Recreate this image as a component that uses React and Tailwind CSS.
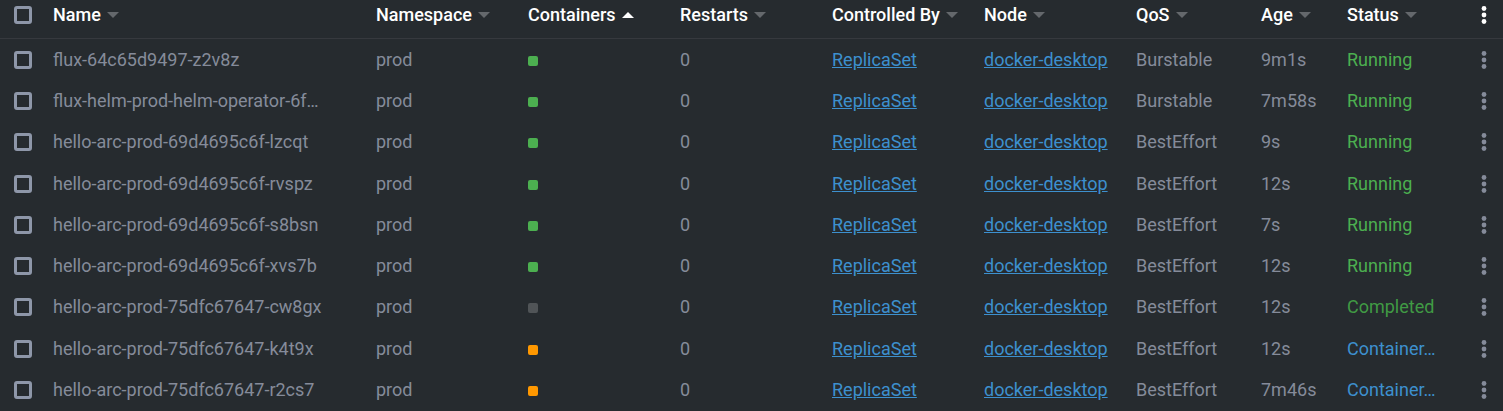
const columns = [
  { label: 'Name', width: 'w-[323px]' },
  { label: 'Namespace', width: 'w-[152px]' },
  { label: 'Containers', width: 'w-[152px]', sorted: true },
  { label: 'Restarts', width: 'w-[152px]' },
  { label: 'Controlled By', width: 'w-[152px]' },
  { label: 'Node', width: 'w-[152px]' },
  { label: 'QoS', width: 'w-[125px]' },
  { label: 'Age', width: 'w-[86px]' },
  { label: 'Status', width: 'w-[108px]' },
];

const pods = [
  { name: 'flux-64c65d9497-z2v8z', box: 'running', qos: 'Burstable', age: '9m1s', status: 'Running' },
  { name: 'flux-helm-prod-helm-operator-6f…', box: 'running', qos: 'Burstable', age: '7m58s', status: 'Running' },
  { name: 'hello-arc-prod-69d4695c6f-lzcqt', box: 'running', qos: 'BestEffort', age: '9s', status: 'Running' },
  { name: 'hello-arc-prod-69d4695c6f-rvspz', box: 'running', qos: 'BestEffort', age: '12s', status: 'Running' },
  { name: 'hello-arc-prod-69d4695c6f-s8bsn', box: 'running', qos: 'BestEffort', age: '7s', status: 'Running' },
  { name: 'hello-arc-prod-69d4695c6f-xvs7b', box: 'running', qos: 'BestEffort', age: '12s', status: 'Running' },
  { name: 'hello-arc-prod-75dfc67647-cw8gx', box: 'ended', qos: 'BestEffort', age: '12s', status: 'Completed' },
  { name: 'hello-arc-prod-75dfc67647-k4t9x', box: 'waiting', qos: 'BestEffort', age: '12s', status: 'Container…' },
  { name: 'hello-arc-prod-75dfc67647-r2cs7', box: 'waiting', qos: 'BestEffort', age: '7m46s', status: 'Container…' },
];

const boxColors = {
  running: 'bg-[#4caf50]',
  ended: 'bg-[#505457]',
  waiting: 'bg-[#ff9800]',
};

const statusColors = {
  Running: 'text-[#4caf50]',
  Completed: 'text-[#409a44]',
  'Container…': 'text-[#3d90ce]',
};

function Checkbox({ label }) {
  return (
    <input
      type="checkbox"
      aria-label={label}
      className="block size-[18px] appearance-none rounded-[3px] border-3 border-[#8e97a9] checked:bg-[#8e97a9]"
    />
  );
}

function SortArrow({ up }) {
  return (
    <svg viewBox="0 0 12 6" className={up ? 'h-[6px] w-3 shrink-0 text-white' : 'h-[6px] w-3 shrink-0 text-[#64686c]'} aria-hidden="true">
      <path fill="currentColor" d={up ? 'M0 6 6 0l6 6z' : 'M0 0h12L6 6z'} />
    </svg>
  );
}

function MenuButton({ label }) {
  return (
    <button type="button" aria-label={label} className="ml-auto block">
      <svg viewBox="0 0 6 18" className="h-[18px] w-[6px]" fill="currentColor" aria-hidden="true">
        <circle cx="3" cy="2.5" r="2.4" />
        <circle cx="3" cy="9" r="2.4" />
        <circle cx="3" cy="15.5" r="2.4" />
      </svg>
    </button>
  );
}

function PodLink({ children }) {
  return (
    <a href="#" className="text-[#3d90ce] underline">
      {children}
    </a>
  );
}

export default function App() {
  return (
    <main className="min-h-screen overflow-x-auto bg-[#262b2f] font-['Roboto',sans-serif] text-[18px] leading-6 text-[#858b9a]">
      <table className="w-full table-fixed border-separate border-spacing-0 text-left whitespace-nowrap">
        <thead className="text-white">
          <tr className="h-[39px]">
            <th className="w-[45px] border-b border-[#36393e] pb-2 pl-[14px]">
              <Checkbox label="Select all pods" />
            </th>
            {columns.map((c) => (
              <th
                key={c.label}
                aria-sort={c.sorted ? 'ascending' : 'none'}
                className={`${c.width} border-b border-[#36393e] pb-2 pl-2 font-medium`}
              >
                <button type="button" className="flex items-center gap-1.5">
                  {c.label}
                  <SortArrow up={c.sorted} />
                </button>
              </th>
            ))}
            <th className="w-14 border-b border-[#36393e] pr-4 pb-2">
              <MenuButton label="Table menu" />
            </th>
          </tr>
        </thead>
        <tbody>
          {pods.map((pod) => (
            <tr key={pod.name} className="h-[41px] nth-[4n+3]:h-[42px]">
              <td className="pl-[14px]">
                <Checkbox label={`Select ${pod.name}`} />
              </td>
              <td className="pl-2">{pod.name}</td>
              <td className="pl-2">prod</td>
              <td className="pl-2">
                <div className={`mt-[2px] size-[10px] rounded-[2px] ${boxColors[pod.box]}`} />
              </td>
              <td className="pl-2">0</td>
              <td className="pl-2">
                <PodLink>ReplicaSet</PodLink>
              </td>
              <td className="pl-2">
                <PodLink>docker-desktop</PodLink>
              </td>
              <td className="pl-2">{pod.qos}</td>
              <td className="pl-2">{pod.age}</td>
              <td className={`pl-2 ${statusColors[pod.status]}`}>{pod.status}</td>
              <td className="pr-4">
                <MenuButton label={`Menu for ${pod.name}`} />
              </td>
            </tr>
          ))}
        </tbody>
      </table>
    </main>
  );
}
